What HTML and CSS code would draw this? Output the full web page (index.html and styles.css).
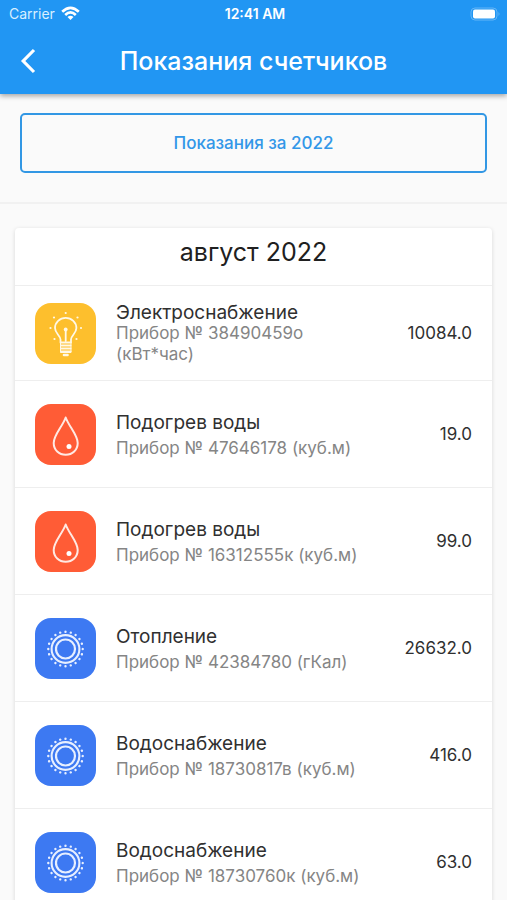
FILE: index.html
```html
<!DOCTYPE html>
<html lang="ru">
<head>
<meta charset="utf-8">
<meta name="viewport" content="width=device-width, initial-scale=1">
<title>Показания счетчиков</title>
<link rel="stylesheet" href="styles.css">
</head>
<body>
<svg class="sprite" aria-hidden="true">
  <symbol id="bulb" viewBox="0 0 61 61">
    <g fill="none" stroke="#fff8e6" stroke-width="1.8" stroke-linecap="round" stroke-linejoin="round">
      <path d="M25.500 39.500V36.500C25.500 32.500 20 30.500 20 25A10.700 10.200 0 0 1 41.400 25C41.400 30.500 36 32.500 36 36.500V39.500Z"/>
      <path d="M30.700 27V38"/>
      <path d="M26 42.500H35.500M26 45.500H35.500M26 48.500H35.500" stroke-width="2"/>
      <path d="M25.500 39.500V49.500H36V39.500" stroke-width="1"/>
      <path d="M29 52H32.500" stroke-width="2.600"/>
    </g>
    <g fill="#fff8e6">
      <circle cx="30.700" cy="26.500" r="1.900"/>
      <circle cx="30.700" cy="10" r="1.100"/><circle cx="19" cy="14.500" r="1.100"/><circle cx="42.500" cy="14.500" r="1.100"/>
      <circle cx="15.500" cy="25" r="1.100"/><circle cx="46" cy="25" r="1.100"/><circle cx="19.500" cy="36" r="1.100"/><circle cx="41.500" cy="36" r="1.100"/>
    </g>
  </symbol>
  <symbol id="drop" viewBox="0 0 61 61">
    <path d="M30.700 13.500C27.500 22.500 18.700 31 18.700 39C18.700 46 24 50.700 30.700 50.700S42.700 46 42.700 39C42.700 31 33.900 22.500 30.700 13.500Z" fill="none" stroke="#ffe9e3" stroke-width="2" stroke-linejoin="round"/>
    <circle cx="34" cy="42.500" r="2.500" fill="#fff"/>
  </symbol>
  <symbol id="sun" viewBox="0 0 61 61">
    <g fill="none" stroke="#e7efff">
      <circle cx="30.500" cy="31" r="13.900" stroke-width="2.100"/>
      <circle cx="30.500" cy="31" r="9.500" stroke-width="2.200"/>
      <circle cx="30.500" cy="31" r="17.200" stroke-width="2.400" stroke-linecap="round" pathLength="180" stroke-dasharray="0.010 8.990"/>
    </g>
  </symbol>
</svg>

<header class="top">
  <div class="status">
    <div class="carrier">
      <span>Carrier</span>
      <svg width="19" height="15" viewBox="0 0 19 15" aria-hidden="true">
        <g fill="none" stroke="#fff" stroke-width="2.600"><path d="M1.200 5.800Q9.500-2.200 17.800 5.800"/><path d="M4.200 9Q9.500 3.800 14.800 9"/></g>
        <path d="M6.500 11Q9.500 8.400 12.500 11L9.500 14Z" fill="#fff"/>
      </svg>
    </div>
    <span class="clock">12:41 AM</span>
    <svg class="battery" width="31" height="14" viewBox="0 0 31 14" aria-hidden="true">
      <rect x="1" y="1" width="26" height="12" rx="4" fill="none" stroke="#64b5f7"/>
      <rect x="3" y="2.500" width="22" height="9" rx="2" fill="#fff"/>
      <path d="M28.500 5Q30.500 7 28.500 9Z" fill="#64b5f7"/>
    </svg>
  </div>
  <div class="bar">
    <button class="back" type="button" aria-label="Назад">
      <svg width="16" height="26" viewBox="0 0 16 26" aria-hidden="true"><path d="M14 2L3.200 13L14 24" fill="none" stroke="#fff" stroke-width="3.200"/></svg>
    </button>
    <h1>Показания счетчиков</h1>
  </div>
</header>

<main>
  <div class="period">
    <button class="period-button" type="button">Показания за 2022</button>
  </div>
  <section class="card">
    <h2>август 2022</h2>
    <ul>
      <li class="row compact"><svg class="icon electric" aria-hidden="true"><use href="#bulb"/></svg><div class="info"><h3>Электроснабжение</h3><p>Прибор № 38490459о (кВт*час)</p></div><span class="value">10084.0</span></li>
      <li class="row"><svg class="icon hot" aria-hidden="true"><use href="#drop"/></svg><div class="info"><h3>Подогрев воды</h3><p>Прибор № 47646178 (куб.м)</p></div><span class="value">19.0</span></li>
      <li class="row"><svg class="icon hot" aria-hidden="true"><use href="#drop"/></svg><div class="info"><h3>Подогрев воды</h3><p>Прибор № 16312555к (куб.м)</p></div><span class="value">99.0</span></li>
      <li class="row"><svg class="icon cold" aria-hidden="true"><use href="#sun"/></svg><div class="info"><h3>Отопление</h3><p>Прибор № 42384780 (гКал)</p></div><span class="value">26632.0</span></li>
      <li class="row"><svg class="icon cold" aria-hidden="true"><use href="#sun"/></svg><div class="info"><h3>Водоснабжение</h3><p>Прибор № 18730817в (куб.м)</p></div><span class="value">416.0</span></li>
      <li class="row"><svg class="icon cold" aria-hidden="true"><use href="#sun"/></svg><div class="info"><h3>Водоснабжение</h3><p>Прибор № 18730760к (куб.м)</p></div><span class="value">63.0</span></li>
    </ul>
  </section>
</main>
</body>
</html>
```
FILE: styles.css
```css
* { box-sizing: border-box; }

html { scrollbar-width: none; }

body {
  margin: 0;
  background: #fafafa;
  color: #303030;
  font-family: Inter, "Noto Sans", sans-serif;
}

h1, h2, h3, p, ul { margin: 0; padding: 0; font-weight: 400; }
ul { list-style: none; }
button { font: inherit; cursor: pointer; }
.sprite { display: none; }

.top {
  position: sticky;
  top: 0;
  z-index: 1;
  background: #2196f3;
  color: #fff;
  box-shadow: 0 2px 5px rgba(0, 0, 0, 0.35);
}

.status {
  display: grid;
  grid-template-columns: 1fr auto 1fr;
  align-items: center;
  height: 27px;
  padding: 0 6px 0 9px;
  font-size: 14px;
}

.carrier { display: flex; align-items: center; gap: 6px; color: #d8efff; }
.clock { font-weight: 600; }
.battery { justify-self: end; }

.bar {
  display: grid;
  grid-template-columns: 56px 1fr 56px;
  align-items: center;
  height: 67px;
}

.back {
  display: grid;
  place-items: center;
  height: 48px;
  padding: 0;
  border: 0;
  background: none;
}

h1 {
  text-align: center;
  font-size: 25px;
  line-height: 32px;
  font-weight: 500;
  white-space: nowrap;
}

.period {
  padding: 19px 20px 29px;
  border-bottom: 2px solid #f1f1f1;
}

.period-button {
  display: block;
  width: 100%;
  height: 60px;
  border: 2px solid #3297e4;
  border-radius: 5px;
  background: none;
  color: #3297e8;
  font-size: 17px;
  font-weight: 500;
}

.card {
  margin: 24px 15px;
  border-radius: 4px;
  background: #fff;
  box-shadow: 0 1px 4px rgba(0, 0, 0, 0.14);
}

h2 {
  padding: 8px 0 17px;
  text-align: center;
  color: #202020;
  font-size: 25px;
  line-height: 32px;
}

.row {
  display: flex;
  align-items: center;
  gap: 20px;
  min-height: 107px;
  padding: 0 20px;
  border-top: 1px solid #eee;
}

.compact { min-height: 95px; }

.icon { flex: none; width: 61px; height: 61px; border-radius: 16px; }
.electric { background: #fdbf2d; }
.hot { background: #ff5c36; }
.cold { background: #3d79f2; }

.info { flex: 1; max-width: 260px; padding-top: 2px; }
h3 { font-size: 19px; line-height: 25px; }
p { margin-top: 1px; color: #858585; font-size: 17px; line-height: 24px; }
.compact .info { max-width: 220px; padding: 0; }
.compact h3 { line-height: 21px; }
.compact p { margin: 0; line-height: 21px; }

.value { margin-left: auto; font-size: 17px; }
```
